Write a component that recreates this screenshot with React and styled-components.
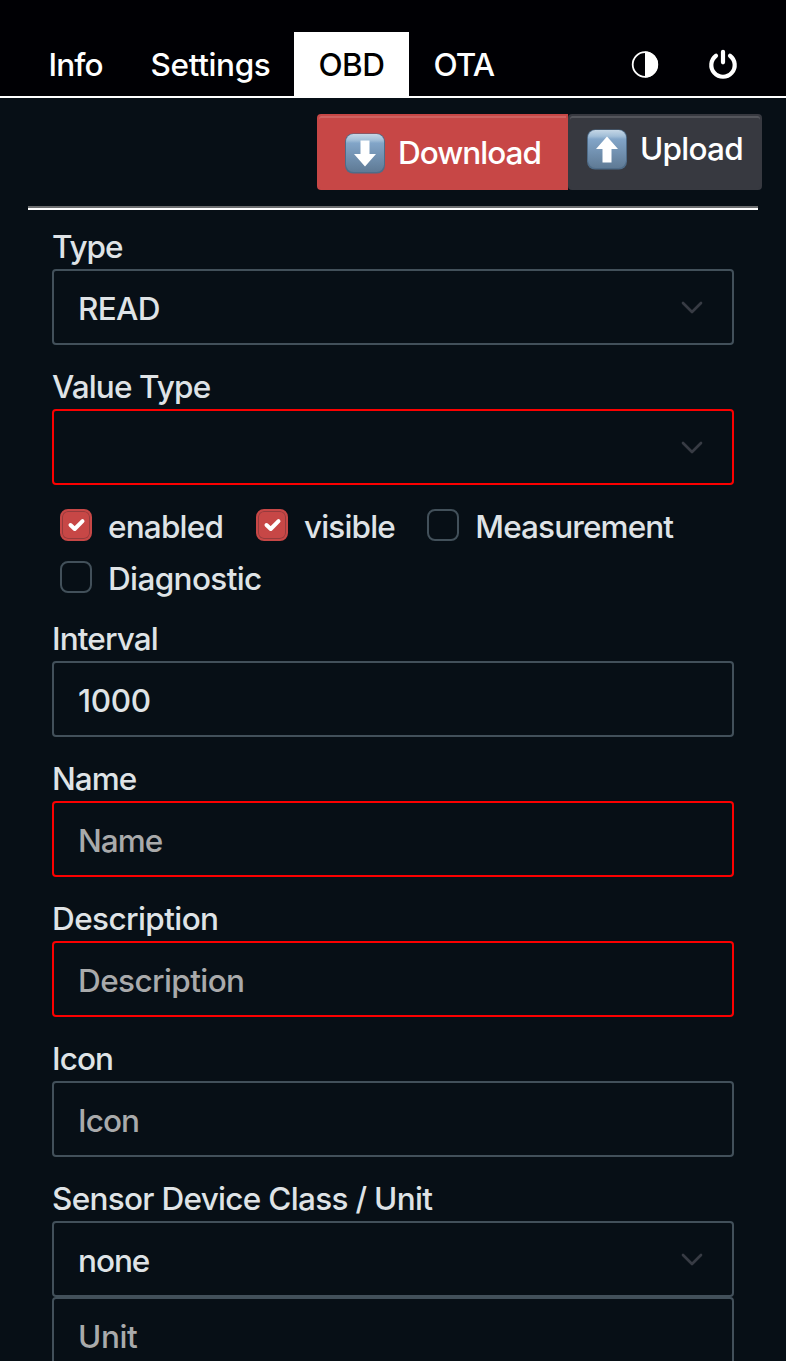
import React from "react";
import styled, { createGlobalStyle, css } from "styled-components";

const GlobalStyle = createGlobalStyle`
  * { box-sizing: border-box; }
  html, body { margin: 0; background: #070f16; }
  body {
    height: 1361px;
    overflow: hidden;
    color: #dfe3e6;
    font: 450 31.5px/40px Inter, "Liberation Sans", sans-serif;
    letter-spacing: -0.6px;
  }
`;

const Header = styled.header`
  height: 98px;
  padding: 32px 24px 0;
  background: #000004;
  border-bottom: 2px solid #fff;
  display: flex;
  justify-content: space-between;
`;
const TabList = styled.nav`
  display: flex;
`;
const Tab = styled.a`
  width: ${(p) => p.$width}px;
  height: 64px;
  padding-left: 24.5px;
  line-height: 65px;
  white-space: nowrap;
  letter-spacing: ${(p) => p.$track ?? -0.6}px;
  color: ${(p) => (p.$active ? "#000" : "#fff")};
  background: ${(p) => (p.$active ? "#fff" : "transparent")};
`;
const HeaderActions = styled.div`
  display: flex;
  align-items: center;
  gap: 48px;
  padding-right: 24px;
`;
const IconButton = styled.button`
  width: 30px;
  height: 64px;
  padding: 0;
  border: 0;
  background: none;
  color: #fff;
  display: grid;
  place-items: center;
`;

const Toolbar = styled.div`
  margin: 0 28px;
  height: 112px;
  padding-top: 16px;
  display: flex;
  justify-content: flex-end;
  border-bottom: 2px solid #fff;
  box-shadow: inset 0 -2px 0 #6c6e70;
`;
const ActionGroup = styled.div`
  display: flex;
  margin-right: -4px;
`;
const ActionButton = styled.button`
  height: 76px;
  width: ${(p) => p.$width}px;
  padding: ${(p) => p.$pad};
  border: 2px solid ${(p) => p.$color};
  border-radius: ${(p) => p.$radius};
  background: ${(p) => p.$color};
  box-shadow: inset 0 2px 0 rgba(255, 255, 255, 0.15);
  color: #fff;
  font: inherit;
  letter-spacing: ${(p) => p.$track}px;
  display: flex;
  gap: 12px;
  align-items: flex-start;
  line-height: 42px;
  white-space: nowrap;
`;

const Form = styled.form`
  padding: 17px 52px 0;
`;
const Field = styled.div`
  height: 140px;
`;
const Label = styled.label`
  display: block;
  height: 42px;
  line-height: 40px;
  white-space: nowrap;
  letter-spacing: ${(p) => p.$track ?? -0.6}px;
`;
const controlBox = css`
  width: 682px;
  height: 76px;
  border: 2px solid ${(p) => (p.$invalid ? "#fb0000" : "#42505a")};
  border-radius: 4px;
  background: transparent;
  color: inherit;
  font: inherit;
  line-height: 40px;
  letter-spacing: ${(p) => p.$track ?? -0.6}px;
  padding: 2px 24px 0;
`;
const Input = styled.input`
  ${controlBox}
  display: block;
  outline: 0;
  &::placeholder { color: #a9aaab; opacity: 1; }
`;
const SelectBox = styled.div`
  ${controlBox}
  display: flex;
  align-items: flex-start;
  justify-content: space-between;
  padding: 18px 28px 0 24px;

  svg { margin-top: 11px; }
`;

const CheckGroup = styled.div`
  height: 112px;
  padding-left: 8px;
  display: flex;
  flex-wrap: wrap;
  align-content: flex-start;
`;
const CheckItem = styled.label`
  display: flex;
  gap: 16px;
  height: 52px;
  width: ${(p) => p.$width}px;
  line-height: 40px;
  white-space: nowrap;
  letter-spacing: ${(p) => p.$track ?? -0.6}px;
`;
const CheckMark = styled.span`
  width: 32px;
  height: 32px;
  margin-top: 2.4px;
  flex: none;
  border-radius: 8px;
  border: 2px solid ${(p) => (p.$checked ? "#c74746" : "#42505a")};
  background: ${(p) => (p.$checked ? "#c74746" : "transparent")};
  box-shadow: ${(p) => (p.$checked ? "inset 0 0 0 1px #963b3d" : "none")};
  display: grid;
  place-items: center;
`;

const ContrastIcon = () => (
  <svg width="28" height="28" viewBox="0 0 28 28">
    <circle cx="14" cy="14.500" r="12.300" fill="none" stroke="#fff" strokeWidth="1.800" />
    <path d="M14 1.500a13 13 0 0 1 0 26z" fill="#fff" />
  </svg>
);
const PowerIcon = () => (
  <svg width="30" height="30" viewBox="0 0 30 30" fill="none" stroke="#fff" strokeWidth="4.200" strokeLinecap="round">
    <path d="M15 2.800v10.500M8 6.700a11.700 11.700 0 1 0 14 0" />
  </svg>
);
const ArrowTile = ({ up }) => (
  <svg width="42" height="42" viewBox="0 0 42 42">
    <defs>
      <linearGradient id={up ? "tileUp" : "tileDown"} x1="0" y1="0" x2="0" y2="1">
        <stop offset="0" stopColor="#c5d7e6" />
        <stop offset=".16" stopColor="#a3bfd8" />
        <stop offset=".24" stopColor="#82a5c8" />
        <stop offset="1" stopColor="#5f7a95" />
      </linearGradient>
    </defs>
    <rect x="1" y="1.500" width="40" height="40" rx="8" fill="#4f6c88" />
    <rect x="2" y="2" width="38" height="38" rx="7.500" fill={`url(#${up ? "tileUp" : "tileDown"})`} />
    <path
      d="M16.500 8.500h9v13.500h6.500L21 34.500 10 22h6.500z"
      fill="#fff"
      transform={up ? "rotate(180 21 21.500)" : undefined}
    />
  </svg>
);
const Chevron = () => (
  <svg width="24" height="16" viewBox="0 0 24 16" fill="none" stroke="#373b44" strokeWidth="2.700" strokeLinecap="round" strokeLinejoin="round">
    <path d="M3 3l9 9 9-9" />
  </svg>
);
const Tick = () => (
  <svg width="20" height="16" viewBox="0 0 20 16" fill="none" stroke="#fff" strokeWidth="4" strokeLinecap="round" strokeLinejoin="round">
    <path d="M4.500 8l4.200 4 7.800-7.800" />
  </svg>
);

const Select = ({ value, ...rest }) => (
  <SelectBox {...rest}>
    <span>{value}</span>
    <Chevron />
  </SelectBox>
);

const Check = ({ label, checked, ...rest }) => (
  <CheckItem {...rest}>
    <CheckMark $checked={checked}>{checked && <Tick />}</CheckMark>
    {label}
  </CheckItem>
);

export default function App() {
  return (
    <>
      <GlobalStyle />
      <Header>
        <TabList>
          <Tab $width={102} $track={-0.9}>Info</Tab>
          <Tab $width={168} $track={-0.35}>Settings</Tab>
          <Tab $width={115} $active>OBD</Tab>
          <Tab $width={110} $track={-0.9}>OTA</Tab>
        </TabList>
        <HeaderActions>
          <IconButton type="button" aria-label="Theme"><ContrastIcon /></IconButton>
          <IconButton type="button" aria-label="Power"><PowerIcon /></IconButton>
        </HeaderActions>
      </Header>
      <Toolbar>
        <ActionGroup>
          <ActionButton type="button" $width={251} $color="#c74746" $radius="4px 0 0 4px" $pad="16px 0 0 25px" $track={-1}>
            <ArrowTile />Download
          </ActionButton>
          <ActionButton type="button" $width={194} $color="#373940" $radius="4px" $pad="12px 0 0 16px" $track={-0.75}>
            <ArrowTile up />Upload
          </ActionButton>
        </ActionGroup>
      </Toolbar>
      <Form>
        <Field>
          <Label $track={-1.1}>Type</Label>
          <Select value="READ" $track={-0.7} />
        </Field>
        <Field>
          <Label $track={-0.87}>Value Type</Label>
          <Select value="" $invalid />
        </Field>
        <CheckGroup>
          <Check label="enabled" checked $width={196} $track={-0.8} />
          <Check label="visible" checked $width={171.3} $track={-0.85} />
          <Check label="Measurement" $width={260} $track={-0.88} />
          <Check label="Diagnostic" $width={210} $track={-0.62} />
        </CheckGroup>
        <Field>
          <Label $track={-0.87}>Interval</Label>
          <Input defaultValue="1000" $track={-0.3} />
        </Field>
        <Field>
          <Label $track={-0.95}>Name</Label>
          <Input placeholder="Name" $invalid $track={-0.95} />
        </Field>
        <Field>
          <Label $track={-0.6}>Description</Label>
          <Input placeholder="Description" $invalid $track={-0.6} />
        </Field>
        <Field>
          <Label $track={-0.9}>Icon</Label>
          <Input placeholder="Icon" $track={-0.9} />
        </Field>
        <Field>
          <Label $track={-0.7}>Sensor Device Class / Unit</Label>
          <Select value="none" $track={-1.05} />
          <Input placeholder="Unit" $track={-0.4} />
        </Field>
      </Form>
    </>
  );
}
